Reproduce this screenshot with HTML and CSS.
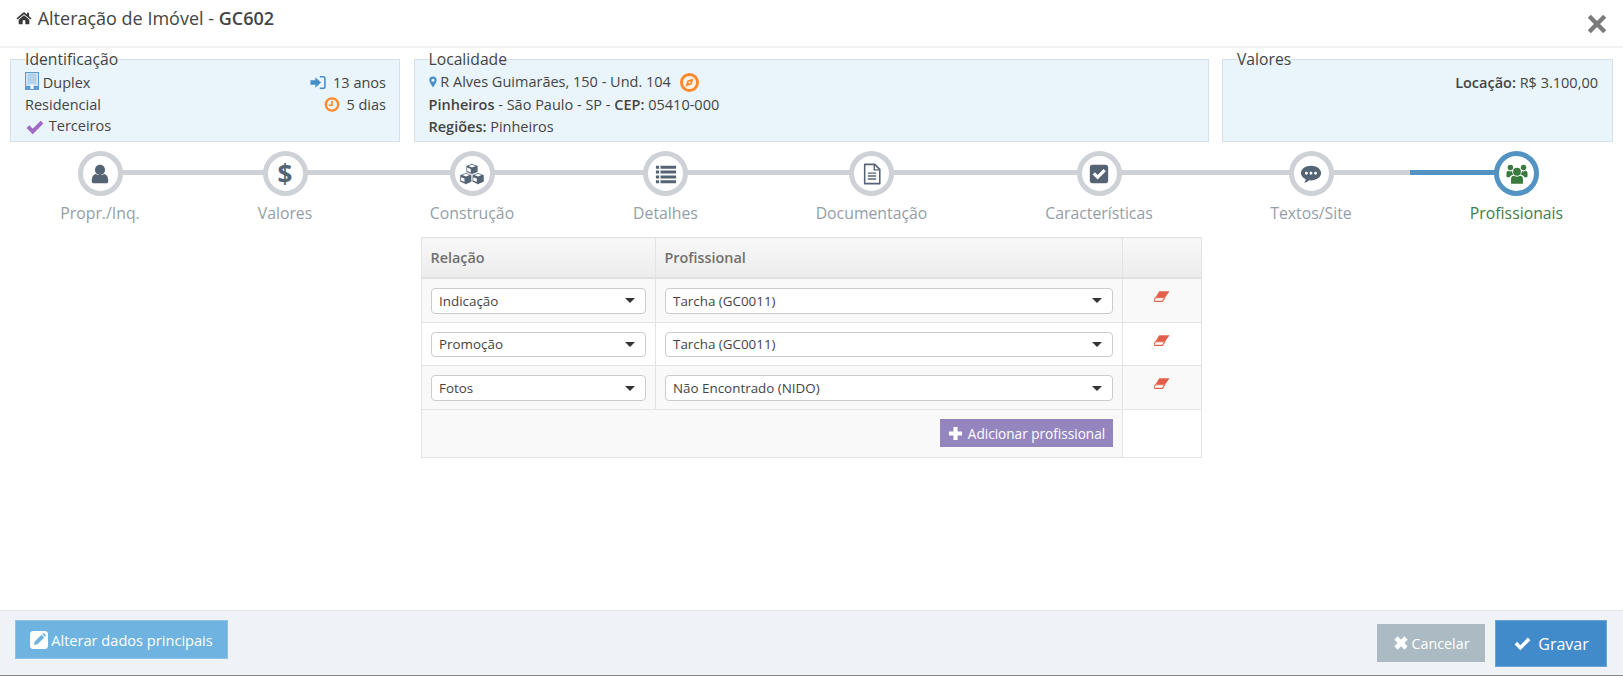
FILE: index.html
```html
<!DOCTYPE html>
<html lang="pt-BR">
<head>
    <meta charset="UTF-8">
    <title>Alteração de Imóvel - GC602</title>
    <link rel="stylesheet" href="styles.css">
</head>
<body>

    <svg class="icon-defs" aria-hidden="true">
        <symbol id="i-check" viewBox="0 0 24 24"><path d="M9 21.5 L0.8 13.3 L4.4 9.7 L9 14.3 L19.6 3.7 L23.2 7.3 Z"/></symbol>
        <symbol id="i-times" viewBox="0 0 24 24"><path d="M7 2 L12 7 L17 2 L22 7 L17 12 L22 17 L17 22 L12 17 L7 22 L2 17 L7 12 L2 7 Z"/></symbol>
        <symbol id="i-eraser" viewBox="0 0 18 14"><path d="M6 1 H17.5 L12.5 8 H1.5 Z"/><path d="M1.5 8.5 H12 L9.5 12.5 H1 Q-0.3 12 0.5 10.5 Z" fill="#fff" stroke="currentColor" stroke-width="1.2"/></symbol>
    </svg>

    <!-- Cabecalho -->
    <header class="modal-header">
        <h1 class="modal-title">
            <svg class="title-icon" viewBox="0 0 24 24"><path d="M12 3 L0.8 12.5 L2.3 14.3 L12 6.2 L21.7 14.3 L23.2 12.5 L19.5 9.4 V4 H16.5 V6.8 Z M12 8 L4 14.7 V21.5 H10 V15.5 H14 V21.5 H20 V14.7 Z"/></svg>
            Alteração de Imóvel - <b>GC602</b>
        </h1>
        <svg class="close-icon" viewBox="0 0 20 20"><path d="M3 3 L17 17 M17 3 L3 17"/></svg>
    </header>

    <main class="modal-body">

        <!-- Resumo do imovel -->
        <section class="summary">
            <fieldset class="box">
                <legend>Identificação</legend>
                <div class="box-row">
                    <span>
                        <svg class="i-building" viewBox="0 0 14 18">
                            <rect x="0.5" y="0.5" width="13" height="17" fill="#cfe2f3" stroke="#5b9bd1"/>
                            <path d="M3 3h8M3 5.5h8M3 8h8M3 10.5h8" stroke="#8db8de" stroke-width="1.4" stroke-dasharray="1.4 0.8"/>
                            <rect x="1" y="14" width="12" height="3" fill="#5b9bd1"/>
                            <rect x="5.5" y="13" width="3" height="4" fill="#fff"/>
                        </svg>
                        Duplex
                    </span>
                    <span>
                        <svg class="i-small i-blue" viewBox="0 0 18 16"><path d="M0.5 5.5 H6 V2 L12.5 8 L6 14 V10.5 H0.5 Z"/><path d="M11 1.5 H15 Q16.8 1.5 16.8 3.5 V12.5 Q16.8 14.5 15 14.5 H11" fill="none" stroke="currentColor" stroke-width="1.8"/></svg>
                        <span class="gap-left">13 anos</span>
                    </span>
                </div>
                <div class="box-row">
                    <span>Residencial</span>
                    <span>
                        <svg class="i-small i-orange" viewBox="0 0 16 16"><circle cx="8" cy="8" r="6.6" fill="none" stroke="currentColor" stroke-width="2.4"/><path d="M8 4 V8.8 H4.5" fill="none" stroke="currentColor" stroke-width="1.8"/></svg>
                        <span class="gap-left">5 dias</span>
                    </span>
                </div>
                <div class="box-row">
                    <span>
                        <svg class="i-check-purple"><use href="#i-check"/></svg>
                        Terceiros
                    </span>
                </div>
            </fieldset>

            <fieldset class="box">
                <legend>Localidade</legend>
                <div class="box-row">
                    <span>
                        <svg class="i-pin" viewBox="0 0 10 14"><path fill-rule="evenodd" d="M5 0 C2 0 0.3 2 0.3 4.6 C0.3 7.5 3.5 11 5 14 C6.5 11 9.7 7.5 9.7 4.6 C9.7 2 8 0 5 0 Z M5 2.8 A2 2 0 1 1 5 6.8 A2 2 0 1 1 5 2.8 Z"/></svg>
                        R Alves Guimarães, 150 - Und. 104
                        <svg class="i-compass i-orange" viewBox="0 0 18 18"><circle cx="9" cy="9" r="7.6" fill="#fdf3ea" stroke="currentColor" stroke-width="2.8"/><path d="M12.8 5.2 L11 11 L5.2 12.8 L7 7 Z"/><circle cx="9" cy="9" r="1" fill="#fdf3ea"/></svg>
                    </span>
                </div>
                <div class="box-row"><span><b>Pinheiros</b> - São Paulo - SP - <b>CEP:</b> 05410-000</span></div>
                <div class="box-row"><span><b>Regiões:</b> Pinheiros</span></div>
            </fieldset>

            <fieldset class="box">
                <legend>Valores</legend>
                <div class="box-row box-row-right"><span><b>Locação:</b> R$ 3.100,00</span></div>
            </fieldset>
        </section>

        <!-- Passos -->
        <ul class="steps">
            <li class="step">
                <span class="step-circle">
                    <svg viewBox="0 0 24 24"><circle cx="12" cy="7.5" r="5.5"/><path d="M4.5 22 C3.5 22 3 21 3 20 C3 15.5 4.5 12.5 7.5 12 C9 13.5 15 13.5 16.5 12 C19.5 12.5 21 15.5 21 20 C21 21 20.5 22 19.5 22 Z"/></svg>
                </span>
                <span class="step-title">Propr./Inq.</span>
            </li>
            <li class="step">
                <span class="step-circle step-dollar">$</span>
                <span class="step-title">Valores</span>
            </li>
            <li class="step">
                <span class="step-circle">
                    <svg class="i-cubes" viewBox="0 0 28 24">
                        <g stroke="#fff" stroke-width="0.7" stroke-linejoin="round">
                            <path d="M14 0.5 L20.5 3 V10 L14 12.5 L7.5 10 V3 Z"/>
                            <path d="M7.5 10.5 L13.8 13 V20.5 L7.5 23.5 L0.8 20.5 V13 Z"/>
                            <path d="M20.5 10.5 L27.2 13 V20.5 L20.5 23.5 L14.2 20.5 V13 Z"/>
                        </g>
                        <path d="M10 3.2 L14 1.8 L18 3.2 L14 4.8 Z M3.4 13.2 L7.5 11.8 L11.4 13.2 L7.5 14.8 Z M16.6 13.2 L20.5 11.8 L24.6 13.2 L20.5 14.8 Z" fill="#fff"/>
                        <path d="M2 15.5 L5.8 17 V20.8 L2 19.2 Z M15.4 15.5 L19.2 17 V20.8 L15.4 19.2 Z M8.7 5 L12.6 6.6 V10.4 L8.7 8.8 Z" fill="#fff"/>
                    </svg>
                </span>
                <span class="step-title">Construção</span>
            </li>
            <li class="step">
                <span class="step-circle">
                    <svg viewBox="0 0 24 24"><path d="M1 3h3.5v3.2h-3.5z M1 8.3h3.5v3.2h-3.5z M1 13.6h3.5v3.2h-3.5z M1 18.9h3.5v3.1h-3.5z M6 3h17v3.2h-17z M6 8.3h17v3.2h-17z M6 13.6h17v3.2h-17z M6 18.9h17v3.1h-17z"/></svg>
                </span>
                <span class="step-title">Detalhes</span>
            </li>
            <li class="step">
                <span class="step-circle">
                    <svg viewBox="0 0 24 24"><path d="M4 1.5 H15 L20.5 7 V22.5 H4 Z" fill="none" stroke="currentColor" stroke-width="1.7" stroke-linejoin="round"/><path d="M14.5 1.5 V7.5 H20.5" fill="none" stroke="currentColor" stroke-width="1.5"/><path d="M7.5 11h9M7.5 14.2h9M7.5 17.4h9" stroke="currentColor" stroke-width="1.5"/></svg>
                </span>
                <span class="step-title">Documentação</span>
            </li>
            <li class="step">
                <span class="step-circle">
                    <svg viewBox="0 0 24 24"><path fill-rule="evenodd" d="M5 2 H19 Q22 2 22 5 V19 Q22 22 19 22 H5 Q2 22 2 19 V5 Q2 2 5 2 Z M10.5 18 L19.5 9 L17 6.5 L10.5 13 L7.5 10 L5 12.5 Z"/></svg>
                </span>
                <span class="step-title">Características</span>
            </li>
            <li class="step">
                <span class="step-circle">
                    <svg viewBox="0 0 24 24"><path fill-rule="evenodd" d="M12 3 C18 3 23 6.5 23 11 C23 15.5 18 19 12 19 C11.3 19 10.7 19 10 18.9 C8.5 20.5 6.5 21.5 4.5 21.8 C5.5 20.5 6 19 6.2 17.7 C3 16.3 1 13.8 1 11 C1 6.5 6 3 12 3 Z M7 9.5 A1.6 1.6 0 1 0 7 12.7 A1.6 1.6 0 1 0 7 9.5 Z M12 9.5 A1.6 1.6 0 1 0 12 12.7 A1.6 1.6 0 1 0 12 9.5 Z M17 9.5 A1.6 1.6 0 1 0 17 12.7 A1.6 1.6 0 1 0 17 9.5 Z"/></svg>
                </span>
                <span class="step-title">Textos/Site</span>
            </li>
            <li class="step step-active">
                <span class="step-circle">
                    <svg viewBox="0 0 24 24"><circle cx="12" cy="9.5" r="4.3"/><path d="M5.5 22.5 V17.5 C5.5 15 7 14 8.5 14 C10 15.2 14 15.2 15.5 14 C17 14 18.5 15 18.5 17.5 V22.5 Z"/><circle cx="4.8" cy="5" r="3"/><circle cx="19.2" cy="5" r="3"/><path d="M0.5 14.5 V11 C0.5 9 2 8.5 3 8.5 C3.8 9.3 5.5 9.3 6.5 8.8 C6.8 10.5 7.2 11.5 8.2 12.5 C6 13 4.5 14 4 15.5 H1 Z M23.5 14.5 V11 C23.5 9 22 8.5 21 8.5 C20.2 9.3 18.5 9.3 17.5 8.8 C17.2 10.5 16.8 11.5 15.8 12.5 C18 13 19.5 14 20 15.5 H23 Z"/></svg>
                </span>
                <span class="step-title">Profissionais</span>
            </li>
        </ul>

        <!-- Profissionais -->
        <table class="prof-table">
            <thead>
                <tr>
                    <th class="col-rel">Relação</th>
                    <th class="col-prof">Profissional</th>
                    <th class="col-act"></th>
                </tr>
            </thead>
            <tbody>
                <tr>
                    <td><div class="fake-select"><span>Indicação</span><i class="caret"></i></div></td>
                    <td><div class="fake-select"><span>Tarcha (GC0011)</span><i class="caret"></i></div></td>
                    <td class="cell-act"><svg class="i-eraser"><use href="#i-eraser"/></svg></td>
                </tr>
                <tr>
                    <td><div class="fake-select"><span>Promoção</span><i class="caret"></i></div></td>
                    <td><div class="fake-select"><span>Tarcha (GC0011)</span><i class="caret"></i></div></td>
                    <td class="cell-act"><svg class="i-eraser"><use href="#i-eraser"/></svg></td>
                </tr>
                <tr>
                    <td><div class="fake-select"><span>Fotos</span><i class="caret"></i></div></td>
                    <td><div class="fake-select"><span>Não Encontrado (NIDO)</span><i class="caret"></i></div></td>
                    <td class="cell-act"><svg class="i-eraser"><use href="#i-eraser"/></svg></td>
                </tr>
            </tbody>
            <tfoot>
                <tr>
                    <td colspan="2" class="cell-add">
                        <button class="btn btn-purple">
                            <svg class="i-plus" viewBox="0 0 16 16"><path d="M5.8 1 H10.2 V5.8 H15 V10.2 H10.2 V15 H5.8 V10.2 H1 V5.8 H5.8 Z"/></svg>
                            Adicionar profissional
                        </button>
                    </td>
                    <td class="cell-empty"></td>
                </tr>
            </tfoot>
        </table>
    </main>

    <!-- Rodape -->
    <footer class="modal-footer">
        <button class="btn btn-info">
            <svg class="i-edit" viewBox="0 0 18 18"><rect x="0" y="0" width="18" height="18" rx="3.5" fill="#fff"/><path d="M4 14 L4.8 10.5 L11.5 3.8 L14.3 6.6 L7.5 13.3 Z M12.3 3 L13.2 2.3 Q13.8 2 14.3 2.4 L15.7 3.8 Q16 4.3 15.7 4.8 L15 5.7 Z" fill="#6fb3e0"/></svg>
            Alterar dados principais
        </button>
        <div class="footer-right">
            <button class="btn btn-grey">
                <svg class="i-btn"><use href="#i-times"/></svg>
                Cancelar
            </button>
            <button class="btn btn-primary">
                <svg class="i-btn-lg"><use href="#i-check"/></svg>
                Gravar
            </button>
        </div>
    </footer>

</body>
</html>
```

FILE: styles.css
```css
* {
    box-sizing: border-box;
}

html, body {
    height: 100%;
}

body {
    margin: 0;
    display: flex;
    flex-direction: column;
    overflow: hidden;
    background: #fff;
    color: #444;
    font-family: "Open Sans", sans-serif;
    font-size: 14.5px;
}

b {
    font-weight: 600;
}

svg {
    vertical-align: middle;
}

.icon-defs {
    display: none;
}

/* --- Cabecalho --- */
.modal-header {
    height: 48px;
    flex: none;
    display: flex;
    align-items: flex-start;
    justify-content: space-between;
    border-bottom: 2px solid #f2f2f2;
    padding: 6px 15px 0 16px;
}

.modal-title {
    margin: 0;
    font-size: 18px;
    font-weight: 400;
    line-height: 24px;
}

.title-icon {
    width: 16px;
    height: 16px;
    margin: -4px 1px 0 0;
    fill: #393939;
}

.close-icon {
    width: 22px;
    height: 22px;
    margin-top: 7px;
    stroke: #7b7b7b;
    stroke-width: 4;
    fill: none;
}

.modal-body {
    flex: 1;
    min-height: 0;
}

/* --- Resumo --- */
.summary {
    display: grid;
    grid-template-columns: 390px 1fr 391px;
    column-gap: 13.5px;
    margin-top: 1px;
    padding: 0 10px;
}

.box {
    height: 93px;
    margin: 0;
    min-width: 0;
    padding: 2px 13px 0 14px;
    border: 1px solid #d5e0e8;
    background: #eaf4fb;
}

.box legend {
    padding: 0;
    font-size: 15.7px;
    line-height: 20px;
}

.box-row {
    display: flex;
    justify-content: space-between;
    align-items: center;
    height: 22px;
    white-space: nowrap;
}

.box-row-right {
    justify-content: flex-end;
    padding-right: 1px;
}

.gap-left {
    margin-left: 3px;
}

.i-building {
    width: 14px;
    height: 18px;
    margin-top: -6px;
}

.i-small {
    width: 16px;
    height: 15px;
    margin-top: -2px;
}

.i-blue {
    fill: #478fca;
    color: #478fca;
}

.i-orange {
    fill: #ff892a;
    color: #ff892a;
}

.i-check-purple {
    width: 20px;
    height: 18px;
    margin-top: -1px;
    fill: #a069c3;
}

.i-pin {
    width: 8px;
    height: 12px;
    margin-top: -2px;
    fill: #478fca;
}

.i-compass {
    width: 19px;
    height: 19px;
    margin: -1px 0 0 5px;
}

/* --- Passos --- */
.steps {
    display: grid;
    grid-template-columns: 200px 170px 204px 183px 229px 226px 198px 213px;
    margin: 9px 0 0;
    padding: 0;
    list-style: none;
}

.step {
    position: relative;
    display: flex;
    flex-direction: column;
    align-items: center;
}

/* linha entre os circulos */
.step::before,
.step::after {
    content: "";
    position: absolute;
    top: 19px;
    width: 50%;
    height: 5px;
    background: #ced1d6;
}

.step::before {
    left: 0;
}

.step::after {
    left: 50%;
}

.step:first-child::before,
.step:last-child::after {
    display: none;
}

.step-circle {
    position: relative;
    z-index: 1;
    width: 45px;
    height: 45px;
    display: flex;
    align-items: center;
    justify-content: center;
    border: 5px solid #ced1d6;
    border-radius: 50%;
    background: #fff;
    color: #546474;
}

.step-circle svg {
    width: 22px;
    height: 22px;
    fill: currentColor;
}

.step-circle svg.i-cubes {
    width: 26px;
    height: 22px;
}

.step-dollar {
    font-size: 26px;
    font-weight: 700;
}

.step-title {
    margin-top: 6px;
    font-size: 15.8px;
    line-height: 22px;
    color: #949ea7;
}

.step-active .step-circle {
    border-color: #5293c4;
    color: #3b7a3f;
}

.step-active::before {
    background: #5293c4;
}

.step-active .step-title {
    color: #3f7d4a;
}

/* --- Tabela --- */
.prof-table {
    width: 781px;
    margin: 13px auto 0;
    border-collapse: collapse;
    table-layout: fixed;
    font-size: 13.4px;
    color: #444;
}

.prof-table th,
.prof-table td {
    border: 1px solid #e3e3e3;
}

.prof-table th {
    height: 40.6px;
    padding: 0 8.5px;
    border-bottom: 2px solid #e0e0e0;
    background: linear-gradient(#f8f8f8, #ececec);
    color: #707070;
    font-size: 14.4px;
    font-weight: 600;
    text-align: left;
}

.col-rel {
    width: 234px;
}

.col-act {
    width: 79px;
}

.prof-table td {
    padding: 9px 9px 8px;
    background: #fff;
}

.prof-table tbody tr:nth-child(odd) td {
    background: #f9f9f9;
}

.fake-select {
    height: 25.6px;
    display: flex;
    align-items: center;
    justify-content: space-between;
    padding: 0 10px 0 7px;
    border: 1px solid #ccc;
    border-radius: 4px;
    background: #fff;
}

.caret {
    width: 0;
    height: 0;
    border-left: 5px solid transparent;
    border-right: 5px solid transparent;
    border-top: 5px solid #333;
}

.cell-act {
    text-align: center;
    vertical-align: top;
}

.i-eraser {
    display: block;
    width: 16px;
    height: 13px;
    margin: 2px auto 0;
    fill: #e2604a;
    color: #e2604a;
}

.prof-table .cell-add {
    height: 48px;
    padding: 0 9px;
    background: #f9f9f9;
    text-align: right;
}

/* --- Botoes --- */
.btn {
    display: inline-flex;
    align-items: center;
    justify-content: center;
    border: 0;
    color: #fff;
    font-family: inherit;
}

.btn-purple {
    width: 173px;
    height: 28px;
    background: #9585bf;
    font-size: 13.6px;
    vertical-align: middle;
}

.i-plus {
    width: 15px;
    height: 15px;
    margin-right: 5px;
    fill: #fff;
}

.btn-info {
    width: 213px;
    height: 39px;
    border: 1px solid #8dc3e8;
    background: #6fb3e0;
    font-size: 14.6px;
}

.i-edit {
    width: 18px;
    height: 18px;
    margin-right: 3px;
}

.btn-grey {
    width: 108px;
    height: 38px;
    margin-top: 4px;
    background: #abbac3;
    font-size: 14.3px;
}

.i-btn {
    width: 16px;
    height: 16px;
    margin-right: 3px;
    fill: #fff;
}

.btn-primary {
    width: 112px;
    height: 47px;
    border: 1px solid #6ba5d8;
    background: #428bca;
    font-size: 16px;
}

.i-btn-lg {
    width: 19px;
    height: 17px;
    margin-right: 6px;
    fill: #fff;
}

/* --- Rodape --- */
.modal-footer {
    height: 66px;
    flex: none;
    display: flex;
    justify-content: space-between;
    align-items: flex-start;
    padding: 9px 16px 0 15px;
    border-top: 1px solid #e4e9ee;
    border-bottom: 1px solid #888;
    background: #eff3f8;
}

.footer-right {
    display: flex;
    gap: 10px;
}
```
